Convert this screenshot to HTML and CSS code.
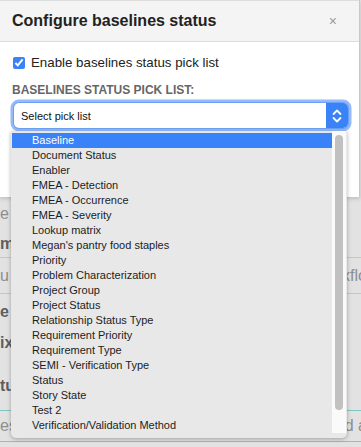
FILE: index.html
```html
<!DOCTYPE html>
<html lang="en">
<head>
    <meta charset="UTF-8">
    <title>Configure baselines status</title>
    <link rel="stylesheet" href="styles.css">
</head>
<body>
    <div class="modal">
        <div class="modal-header">
            <h3>Configure baselines status</h3>
            <span class="close">&times;</span>
        </div>
        <div class="modal-body">
            <label class="check">
                <input type="checkbox" checked>
                <span>Enable baselines status pick list</span>
            </label>
            <div class="field-label">BASELINES STATUS PICK LIST:</div>
            <div class="select">
                <span class="select-text">Select pick list</span>
                <span class="select-btn">
                    <svg width="12" height="16" viewBox="0 0 12 16">
                        <path d="M2.5 6 L6 2.5 L9.5 6 M2.5 10 L6 13.5 L9.5 10" fill="none" stroke="#fff" stroke-width="1.8" stroke-linecap="round" stroke-linejoin="round"/>
                    </svg>
                </span>
            </div>
        </div>
    </div>

    <!-- page behind the modal -->
    <div class="backdrop">
        <div class="row r1"><span class="light">e it</span></div>
        <div class="row r2"><span class="dark">m</span></div>
        <div class="row r3 yellow"><span class="light">u</span><span class="light">xflo</span></div>
        <div class="row r4"><span class="dark">e</span></div>
        <div class="row r5"><span class="dark">ix</span></div>
        <div class="row r6"><span class="dark indent">c</span></div>
        <div class="row r7"><span class="dark">tus</span></div>
        <div class="row r8"></div>
        <div class="row r9 teal"><span class="light">es</span><span class="light">d a</span></div>
    </div>

    <div class="picklist">
        <ul class="options">
            <li class="active">Baseline</li>
            <li>Document Status</li>
            <li>Enabler</li>
            <li>FMEA - Detection</li>
            <li>FMEA - Occurrence</li>
            <li>FMEA - Severity</li>
            <li>Lookup matrix</li>
            <li>Megan's pantry food staples</li>
            <li>Priority</li>
            <li>Problem Characterization</li>
            <li>Project Group</li>
            <li>Project Status</li>
            <li>Relationship Status Type</li>
            <li>Requirement Priority</li>
            <li>Requirement Type</li>
            <li>SEMI - Verification Type</li>
            <li>Status</li>
            <li>Story State</li>
            <li>Test 2</li>
            <li>Verification/Validation Method</li>
        </ul>
        <div class="scrollbar"><div class="thumb"></div></div>
    </div>
</body>
</html>
```

FILE: styles.css
```css
body {
    font-family: "Liberation Sans", Arial, sans-serif;
    margin: 0;
    background: #e2e2e2;
    overflow: hidden;
    height: 447px;
    position: relative;
}
.modal {
    width: 359px;
    background: #fff;
    border-right: 1px solid #c8c8c8;
    box-shadow: 0 2px 4px rgba(0,0,0,0.15);
    position: relative;
    z-index: 1;
}
.modal-header {
    background: #f4f4f4;
    border-top: 1px solid #ddd;
    border-bottom: 1px solid #ddd;
    display: flex;
    align-items: center;
    justify-content: space-between;
    padding: 0 12px;
    box-sizing: border-box;
    height: 42px;
}
.modal-header h3 {
    margin: 0;
    font-size: 16px;
    font-weight: bold;
    color: #222;
}
.close {
    font-size: 14px;
    color: #9a9a9a;
    margin-right: 10px;
}
.modal-body {
    height: 155px;
    padding: 13px 12px 0;
    box-sizing: border-box;
}
.check {
    display: flex;
    align-items: center;
    gap: 6px;
    font-size: 13.3px;
    color: #222;
}
.check input {
    margin: 0 0 0 1px;
    width: 12px;
    height: 12px;
    accent-color: #3a82f7;
}
.field-label {
    margin-top: 13px;
    font-size: 12px;
    font-weight: bold;
    color: #666;
}
.select {
    margin: 6px -1px 0 2px;
    height: 25px;
    display: flex;
    align-items: center;
    justify-content: space-between;
    background: #fff;
    border-radius: 5px;
    box-shadow: 0 0 0 1px #6aa0f5, 0 0 0 3.5px rgba(80,140,245,0.6);
    font-size: 11px;
    color: #111;
}
.select-text {
    padding-left: 7px;
}
.select-btn {
    width: 22px;
    height: 25px;
    background: #3a82f7;
    border-radius: 0 5px 5px 0;
    display: flex;
    align-items: center;
    justify-content: center;
}

.backdrop {
    font-size: 16px;
}
.row {
    display: flex;
    justify-content: space-between;
    align-items: center;
    overflow: hidden;
    white-space: nowrap;
}
.row span:last-child:not(:first-child) {
    margin-right: -6px;
}
.light { color: #8e8e8e; }
.dark { color: #5e5e5e; font-weight: bold; }
.indent { margin-left: 13px; }
.r1 { height: 33px; }
.r2 { height: 27px; border-bottom: 1px solid #e3c878; }
.r3 { height: 35px; border-bottom: 1px solid #e3c878; }
.r4 { height: 36px; }
.r5 { height: 25px; }
.r6 { height: 22px; }
.r7 { height: 18px; }
.r8 { height: 15px; border-bottom: 1px solid #7fc6c4; }
.r9 { height: 30px; border-bottom: 1px solid #7fc6c4; }

.picklist {
    position: absolute;
    left: 11px;
    top: 131px;
    width: 336px;
    height: 307px;
    background: #e8e8e8;
    border-radius: 0 0 5px 5px;
    box-shadow: 0 1px 4px rgba(0,0,0,0.3);
    display: flex;
    z-index: 2;
}
.options {
    list-style: none;
    margin: 0;
    padding: 2px 0 0 1px;
    flex: 1;
}
.options li {
    height: 15px;
    line-height: 15px;
    padding-left: 20px;
    font-size: 11px;
    color: #1c1c1c;
}
.options li.active {
    background: #3a82f7;
    color: #fff;
}
.scrollbar {
    width: 14px;
    margin: 0 1px 5px 0;
    background: #fafafa;
    padding-top: 4px;
    box-sizing: border-box;
}
.thumb {
    width: 8px;
    height: 275px;
    margin-left: 3px;
    background: #c1c1c1;
    border-radius: 4px;
}
```
